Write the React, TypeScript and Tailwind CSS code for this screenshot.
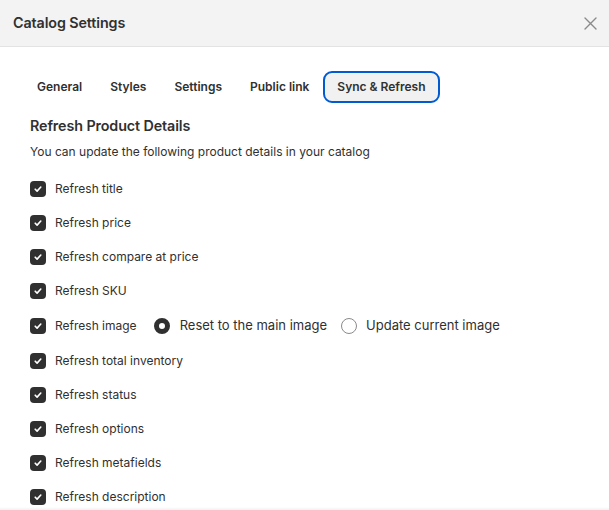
import React from "react";

const items = [
  "Refresh title",
  "Refresh price",
  "Refresh compare at price",
  "Refresh SKU",
  "Refresh image",
  "Refresh total inventory",
  "Refresh status",
  "Refresh options",
  "Refresh metafields",
  "Refresh description",
];

function Check() {
  return (
    <span className="flex h-4 w-4 shrink-0 items-center justify-center rounded-[4px] bg-[#303030]">
      <svg width="10" height="10" viewBox="0 0 10 10" fill="none">
        <path d="M2.2 5.2L4.1 7.1L7.8 3" stroke="white" strokeWidth="1.6" strokeLinecap="round" strokeLinejoin="round" />
      </svg>
    </span>
  );
}

export default function App() {
  const tabs = ["General", "Styles", "Settings", "Public link", "Sync & Refresh"];
  return (
    <div className="flex h-[510px] w-[609px] flex-col overflow-hidden bg-white text-[#303030]" style={{ fontFamily: "Inter, 'Noto Sans', sans-serif" }}>
      <div className="flex h-[47px] shrink-0 items-center justify-between border-b border-[#e3e3e3] bg-[#f3f3f3] pl-[13px] pr-[12px]">
        <span className="text-[14.3px] font-semibold tracking-[-0.1px]">Catalog Settings</span>
        <svg width="13" height="13" viewBox="0 0 13 13" fill="none">
          <path d="M1 1L12 12M12 1L1 12" stroke="#8a8a8a" strokeWidth="1.4" strokeLinecap="round" />
        </svg>
      </div>
      <div className="flex min-h-0 flex-1 flex-col overflow-hidden px-[23px] pt-[24px]">
        <div className="flex">
          {tabs.map((t, i) => (
            <div
              key={t}
              className={
                "flex h-[32px] items-center rounded-[9px] border-2 px-3 text-[12px] font-semibold " +
                (i === 4 ? "border-[#005bd3] bg-[#f1f1f1]" : "border-transparent")
              }
            >
              {t}
            </div>
          ))}
        </div>
        <div className="pl-[7px] pt-[13px]">
          <div className="text-[14.3px] font-semibold leading-[20px] tracking-[-0.1px]">Refresh Product Details</div>
          <div className="mt-[6px] text-[12px] leading-[20px]">You can update the following product details in your catalog</div>
          <div className="mt-[10px] flex flex-col">
            {items.map((it, i) => (
              <div key={it} className={"flex h-[34px] shrink-0 items-center text-[12px] " + (i === 4 || i === 5 ? "mt-[1px]" : "")}>
                <Check />
                <span className="ml-[9px]">{it}</span>
                {it === "Refresh image" && (
                  <>
                    <span className="ml-[17px] h-4 w-4 rounded-full border-[5px] border-[#303030] bg-white" />
                    <span className="ml-[10px] text-[13px]">Reset to the main image</span>
                    <span className="ml-[14px] h-4 w-4 rounded-full border border-[#8a8a8a] bg-white" />
                    <span className="ml-[9px] text-[13px]">Update current image</span>
                  </>
                )}
              </div>
            ))}
          </div>
        </div>
      </div>
      <div className="h-[3px] shrink-0 bg-gradient-to-b from-white to-[#f1f1f1]" />
    </div>
  );
}
